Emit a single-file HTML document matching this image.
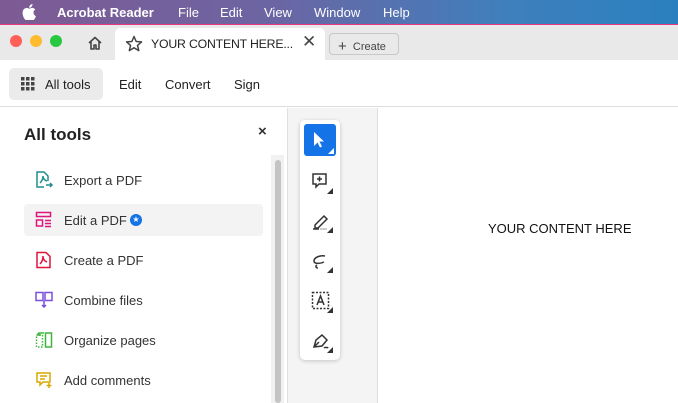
<!DOCTYPE html>
<html><head><style>
*{margin:0;padding:0;box-sizing:border-box}
body{width:678px;height:403px;overflow:hidden;font-family:"Liberation Sans",sans-serif;background:#fff;position:relative}
.a{position:absolute}
.menu{left:0;top:0;width:678px;height:24px;background:linear-gradient(90deg,#7e5a93 0%,#6c65a3 40%,#3f7fbd 75%,#2a80be 100%);color:#fff;font-size:13px}
.menu span{position:absolute;top:5px}
.tabs{left:0;top:24px;width:678px;height:36px;background:#e9e9e9;border-top:1px solid #e6387a}
.tb{top:60px;left:0;width:678px;height:47px;background:#fff;border-bottom:1px solid #ddd}
.item{position:absolute;left:24px;width:239px;height:32px;font-size:13px;color:#333}
.item span{position:absolute;left:40px;top:9px}
.item svg{position:absolute;left:11px;top:7px}
.tool svg{position:absolute}
</style></head><body>
<div class="a menu">
<svg class="a" style="left:22px;top:4px" width="14" height="16" viewBox="0 0 14 16"><path d="M11.5 8.5c0-2 1.6-2.9 1.7-3-1-1.4-2.4-1.6-2.9-1.6-1.2-.1-2.4.7-3 .7s-1.6-.7-2.6-.7C3.400 4 2 4.800 1.300 6c-1.500 2.600-.4 6.400 1 8.500.7 1 1.500 2.100 2.600 2.100 1 0 1.400-.7 2.700-.7s1.600.7 2.700.7 1.800-1 2.500-2c.8-1.200 1.100-2.300 1.100-2.400 0 0-2.300-.9-2.400-3.700zM9.600 2.600c.6-.7 1-1.600.9-2.600-.8 0-1.800.6-2.400 1.300-.5.600-1 1.600-.9 2.500.9.1 1.800-.5 2.400-1.200z" fill="#fff"/></svg>
<span style="left:57px;font-weight:bold">Acrobat Reader</span>
<span style="left:178px">File</span><span style="left:220px">Edit</span><span style="left:264px">View</span><span style="left:314px">Window</span><span style="left:383px">Help</span>
</div>
<div class="a tabs">
<div class="a" style="left:10px;top:10px;width:12px;height:12px;border-radius:50%;background:#fe5f57"></div>
<div class="a" style="left:30px;top:10px;width:12px;height:12px;border-radius:50%;background:#febc2e"></div>
<div class="a" style="left:50px;top:10px;width:12px;height:12px;border-radius:50%;background:#28c840"></div>
<svg class="a" style="left:87px;top:10px" width="16" height="16" viewBox="0 0 16 16"><path d="M2 8L8 2.5 14 8M4 6.5V14h3v-4h2v4h3V6.5" fill="none" stroke="#444" stroke-width="1.6" stroke-linejoin="round"/></svg>
<div class="a" style="left:115px;top:3px;width:210px;height:33px;background:#fff;border-radius:5px 5px 0 0"></div>
<svg class="a" style="left:125px;top:10px" width="18" height="18" viewBox="0 0 18 18"><path d="M9 1.5l2.2 5 5.3.4-4 3.5 1.3 5.2L9 12.8l-4.700 2.800 1.300-5.200-4-3.500 5.300-.4z" fill="none" stroke="#444" stroke-width="1.5" stroke-linejoin="round"/></svg>
<div class="a" style="left:151px;top:12px;font-size:12.3px;color:#222;letter-spacing:-0.2px">YOUR CONTENT HERE...</div>
<div class="a" style="left:302px;top:7px;font-size:17px;color:#444">✕</div>
<div class="a" style="left:329px;top:8px;width:70px;height:22px;border:1px solid #c8c8c8;border-radius:4px;font-size:11px;color:#444;padding:3px 0 0 8px"><span style="font-size:15px;position:relative;top:1px">+</span>&nbsp; Create</div>
</div>
<div class="a tb">
<div class="a" style="left:9px;top:8px;width:94px;height:32px;background:#ebebeb;border-radius:5px"></div>
<svg class="a" style="left:21px;top:17px" width="14" height="14" viewBox="0 0 14 14" fill="#444"><rect x="0" y="0" width="3.500" height="3.500"/><rect x="5" y="0" width="3.500" height="3.500"/><rect x="10" y="0" width="3.500" height="3.500"/><rect x="0" y="5" width="3.500" height="3.500"/><rect x="5" y="5" width="3.500" height="3.500"/><rect x="10" y="5" width="3.500" height="3.500"/><rect x="0" y="10" width="3.500" height="3.500"/><rect x="5" y="10" width="3.500" height="3.500"/><rect x="10" y="10" width="3.500" height="3.500"/></svg>
<div class="a" style="left:45px;top:17px;font-size:13px;color:#222">All tools</div>
<div class="a" style="left:119px;top:17px;font-size:13px;color:#222">Edit</div>
<div class="a" style="left:165px;top:17px;font-size:13px;color:#222">Convert</div>
<div class="a" style="left:234px;top:17px;font-size:13px;color:#222">Sign</div>
</div>
<div class="a" style="left:287px;top:108px;width:1px;height:295px;background:#e0e0e0"></div>
<div class="a" style="left:288px;top:108px;width:89px;height:295px;background:#f4f4f4"></div>
<div class="a" style="left:377px;top:108px;width:1px;height:295px;background:#ddd"></div>
<div class="a" style="left:24px;top:125px;font-size:17px;font-weight:bold;color:#222">All tools</div>
<div class="a" style="left:258px;top:123px;font-size:15px;color:#333;font-weight:bold">×</div>
<div class="a" style="left:271px;top:155px;width:13px;height:248px;background:#f1f1f1"></div>
<div class="a" style="left:275px;top:160px;width:6px;height:243px;background:#c4c4c4;border-radius:3px"></div>

<div class="item" style="top:164px"><svg width="18" height="18" viewBox="0 0 18 18" fill="none" stroke="#1b8f8a" stroke-width="1.5"><path d="M9 16H2V1h7l4 4v5"/><path d="M5 12c2-2 3-5 3-7 0 2 1 4 4 5M11 14h6M15 12l2 2-2 2"/></svg><span>Export a PDF</span></div>
<div class="item" style="top:204px;background:#f3f3f3;border-radius:4px"><svg width="18" height="18" viewBox="0 0 18 18" fill="none" stroke="#e0147b" stroke-width="1.5"><rect x="1.500" y="1.500" width="14" height="4"/><rect x="1.500" y="9" width="6" height="6"/><path d="M10 9.500h6M10 12.500h6M10 15.500h6"/></svg><span>Edit a PDF</span><div style="position:absolute;left:106px;top:10px;width:12px;height:12px;border-radius:50%;background:#1473e6;color:#fff;font-size:8px;text-align:center;line-height:12px">★</div></div>
<div class="item" style="top:244px"><svg width="18" height="18" viewBox="0 0 18 18" fill="none" stroke="#e0143c" stroke-width="1.5"><path d="M2 1.500h9l4 4V16.500H2z"/><path d="M5 13c2-2 3-5 3-8 0 3 1 5 4 6"/></svg><span>Create a PDF</span></div>
<div class="item" style="top:284px"><svg width="18" height="18" viewBox="0 0 18 18" fill="none" stroke="#7c4dde" stroke-width="1.5"><rect x="1" y="1.500" width="7" height="8"/><rect x="10" y="1.500" width="7" height="8"/><path d="M9 10v6M7 14l2 2 2-2"/></svg><span>Combine files</span></div>
<div class="item" style="top:324px"><svg width="18" height="18" viewBox="0 0 18 18" fill="none" stroke="#3db53d" stroke-width="1.5"><rect x="1.500" y="4" width="6" height="12" stroke-dasharray="1.500 1.500"/><rect x="10.500" y="2" width="6" height="14"/><path d="M4 5V2h5M2 4l2-2"/></svg><span>Organize pages</span></div>
<div class="item" style="top:364px"><svg width="18" height="18" viewBox="0 0 18 18" fill="none" stroke="#d8a800" stroke-width="1.5"><path d="M2 2h13v9H8l-3 3v-3H2z"/><path d="M5 5h7M5 8h5M14 12v5M11.500 14.500h5"/></svg><span>Add comments</span></div>

<div class="a tool" style="left:300px;top:120px;width:40px;height:240px;background:#fff;border-radius:5px;box-shadow:0 1px 4px rgba(0,0,0,.2)">
<div class="a" style="left:4px;top:4px;width:32px;height:32px;background:#1473e6;border-radius:3px"></div>
<svg style="left:13px;top:11px" width="16" height="20" viewBox="0 0 16 20"><path d="M1 1v14l3.500-3.500 2.500 5 2-1-2.500-5H11z" fill="#fff"/></svg>
<svg style="left:28px;top:28px" width="6" height="6"><path d="M6 0v6H0z" fill="#fff"/></svg>
<svg style="left:11px;top:52px" width="22" height="22" viewBox="0 0 22 22" fill="none" stroke="#333" stroke-width="1.5"><path d="M2 2h13v10H8l-3 3v-3H2z"/><path d="M8.500 4.500v5M6 7h5"/><path d="M22 16v6h-6z" fill="#333" stroke="none"/></svg>
<svg style="left:11px;top:91px" width="22" height="22" viewBox="0 0 22 22" fill="none" stroke="#333" stroke-width="1.5"><path d="M4 14L13 5l3 3-9 9H4z"/><path d="M2 18h6" /><path d="M9 18h7" stroke="#bbb"/><path d="M22 16v6h-6z" fill="#333" stroke="none"/></svg>
<svg style="left:11px;top:131px" width="22" height="22" viewBox="0 0 22 22" fill="none" stroke="#333" stroke-width="1.500"><path d="M14 5c-4-1-11 1-11 5 0 3 6 3 10 1M6 14c-2 1-1 3 1 3"/><path d="M22 16v6h-6z" fill="#333" stroke="none"/></svg>
<svg style="left:11px;top:171px" width="22" height="22" viewBox="0 0 22 22" fill="none" stroke="#333" stroke-width="1.500"><rect x="1.500" y="1.500" width="16" height="16" stroke-dasharray="2 1.500"/><path d="M6 14l3.500-9 3.500 9M7.300 11h4.400"/><path d="M22 16v6h-6z" fill="#333" stroke="none"/></svg>
<svg style="left:11px;top:211px" width="22" height="22" viewBox="0 0 22 22" fill="none" stroke="#333" stroke-width="1.500"><path d="M3 16l2-7 6-5 5 5-5 6z M3 16l5-5"/><path d="M13 17c2-2 3 1 4-1"/><path d="M22 16v6h-6z" fill="#333" stroke="none"/></svg>
</div>
<div class="a" style="left:488px;top:221px;font-size:13px;color:#111">YOUR CONTENT HERE</div>
</body></html>
